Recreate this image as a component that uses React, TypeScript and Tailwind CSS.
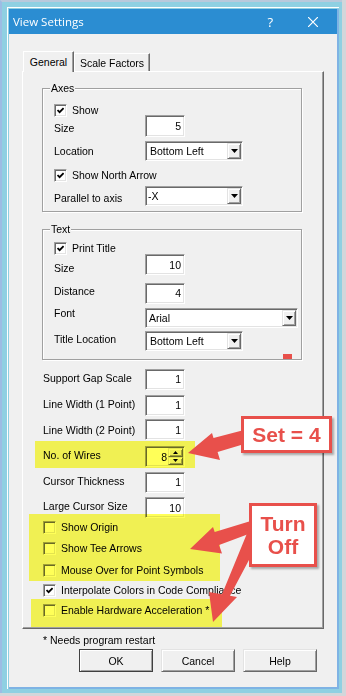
import React from 'react'

// classic win32 3D edges
const sunk =
  'border border-t-[#a0a0a0] border-l-[#a0a0a0] border-r-white border-b-white shadow-[inset_1px_1px_0_#696969,inset_-1px_-1px_0_#e3e3e3]'
const raised =
  'border border-t-[#e3e3e3] border-l-[#e3e3e3] border-r-[#696969] border-b-[#696969] shadow-[inset_1px_1px_0_#fff,inset_-1px_-1px_0_#a0a0a0]'
const etched = 'border border-[#a0a0a0] shadow-[inset_1px_1px_0_#fff,1px_1px_0_#fff]'

function Check({ on }: { on?: boolean }) {
  return (
    <span className={`w-[13px] h-[13px] shrink-0 bg-white flex items-center justify-center ${sunk}`}>
      {on && (
        <svg width="7" height="7" viewBox="0 0 7 7">
          <polyline points="0.5,3 2.6,5.2 6.6,1" fill="none" stroke="#000" strokeWidth="1.8" />
        </svg>
      )}
    </span>
  )
}

function CheckRow({ label, on, h }: { label: string; on?: boolean; h: string }) {
  return (
    <div className={`flex items-center gap-[5px] ${h}`}>
      <Check on={on} />
      <span className="whitespace-nowrap">{label}</span>
    </div>
  )
}

function Num({ v, h = 'h-[21px]', extra = '' }: { v: string; h?: string; extra?: string }) {
  return (
    <div className={`w-[40px] ${h} ${extra} shrink-0 bg-white flex items-center justify-end p-px pr-[3px] ${sunk}`}>
      {v}
    </div>
  )
}

function Spin() {
  return (
    <div className={`w-[40px] h-[21px] mt-[4px] shrink-0 bg-white flex items-center justify-end p-px ${sunk}`}>
      <span className="pr-[1px]">8</span>
      <div className="flex flex-col w-[15px] h-full">
        <div className={`flex-1 bg-[#f0f0f0] flex items-center justify-center ${raised}`}>
          <svg width="5" height="3" viewBox="0 0 5 3"><polygon points="2.5,0 5,3 0,3" fill="#000" /></svg>
        </div>
        <div className={`flex-1 bg-[#f0f0f0] flex items-center justify-center ${raised}`}>
          <svg width="5" height="3" viewBox="0 0 5 3"><polygon points="0,0 5,0 2.5,3" fill="#000" /></svg>
        </div>
      </div>
    </div>
  )
}

function Combo({ v, w, pl }: { v: string; w: string; pl: string }) {
  return (
    <div className={`${w} h-[20px] shrink-0 bg-white flex p-px ${sunk}`}>
      <span className={`flex-1 flex items-center ${pl} whitespace-nowrap`}>{v}</span>
      <span className={`w-[14px] h-full bg-[#f0f0f0] flex items-center justify-center ${raised}`}>
        <svg width="7" height="4" viewBox="0 0 7 4"><polygon points="0,0 7,0 3.5,4" fill="#000" /></svg>
      </span>
    </div>
  )
}

function Btn({ label, def }: { label: string; def?: boolean }) {
  return (
    <div
      className={`w-[74px] h-[23px] bg-[#f0f0f0] flex items-center justify-center ${
        def
          ? 'border border-[#404040] shadow-[inset_1px_1px_0_#fff,inset_-1px_-1px_0_#a0a0a0]'
          : raised
      }`}
    >
      {label}
    </div>
  )
}

export default function App() {
  return (
    <div className="relative w-[346px] h-[696px] bg-[#d3d6da] font-['Liberation_Sans',Arial,sans-serif] text-[10.5px] leading-[14px] text-black overflow-hidden">
      {/* window frame */}
      <div className="w-[342px] h-[693px] bg-[#8fd0e2] border-t-2 border-l-2 border-t-[#b9c9dc] border-l-[#9cbce4] pl-[5px] pt-[5px]">
        <div className="w-[332px] h-[682px] border-t border-l border-white pl-px pt-px">
          <div className="w-[330px] h-[680px] bg-[#f0f0f0] border-r-2 border-b-2 border-[#7fb3e4] flex flex-col">
            {/* title bar */}
            <div className="h-[25px] shrink-0 bg-[#2b8dd2] flex items-center pl-[4px] pr-[19px] text-white font-['Open_Sans',sans-serif] text-[11.5px]">
              <span className="flex-1">View Settings</span>
              <span className="text-[13px] mr-[35px]">?</span>
              <svg width="10" height="10" viewBox="0 0 10 10">
                <path d="M0 0L10 10M10 0L0 10" stroke="#fff" strokeWidth="1.2" />
              </svg>
            </div>

            <div className="flex-1 pl-[13px] pt-[17px]">
              {/* tabs */}
              <div className="flex items-end h-[20px] ml-[1px]">
                <div className="relative z-10 w-[51px] h-[21px] mb-[-1px] bg-[#f0f0f0] border-t border-l border-white border-r border-r-[#696969] shadow-[inset_-1px_0_0_#a0a0a0] flex items-center justify-center">
                  General
                </div>
                <div className="w-[76px] h-[18px] bg-[#f0f0f0] border-t border-l border-white border-r border-r-[#696969] shadow-[inset_-1px_0_0_#a0a0a0] flex items-center justify-center">
                  Scale Factors
                </div>
              </div>

              {/* tab panel */}
              <div className="relative w-[302px] h-[558px] border-t border-l border-t-white border-l-white border-r border-b border-r-[#696969] border-b-[#696969] shadow-[inset_-1px_-1px_0_#a0a0a0] flex flex-col">
                <fieldset className={`ml-[19px] mt-[9px] w-[260px] ${etched}`}>
                  <legend className="ml-[7px] px-[1px] bg-[#f0f0f0] leading-[14px]">Axes</legend>
                  <div className="pl-[11px] pt-[7px] pb-[1px] flex flex-col">
                    <CheckRow label="Show" on h="h-[16px]" />
                    <div className="flex items-center h-[16px]">
                      <span className="w-[91px] shrink-0 mt-[4px]">Size</span>
                      <Num v="5" h="h-[22px]" />
                    </div>
                    <div className="flex items-center h-[34px]">
                      <span className="w-[91px] shrink-0">Location</span>
                      <Combo v="Bottom Left" w="w-[98px]" pl="pl-[3px]" />
                    </div>
                    <CheckRow label="Show North Arrow" on h="h-[14px]" />
                    <div className="flex items-center h-[28px]">
                      <span className="w-[91px] shrink-0 mt-[4px]">Parallel to axis</span>
                      <Combo v="-X" w="w-[98px]" pl="pl-[1px]" />
                    </div>
                  </div>
                </fieldset>

                <fieldset className={`ml-[19px] mt-[10px] w-[260px] ${etched}`}>
                  <legend className="ml-[7px] px-[1px] bg-[#f0f0f0] leading-[14px]">Text</legend>
                  <div className="pl-[11px] pt-[5px] flex flex-col">
                    <CheckRow label="Print Title" on h="h-[14px]" />
                    <div className="flex items-center h-[19px]">
                      <span className="w-[91px] shrink-0 mt-[7px]">Size</span>
                      <Num v="10" />
                    </div>
                    <div className="flex items-center h-[38px]">
                      <span className="w-[91px] shrink-0 mb-[4px]">Distance</span>
                      <Num v="4" />
                    </div>
                    <div className="flex items-center h-[11px]">
                      <span className="w-[91px] shrink-0 mb-[9px]">Font</span>
                      <Combo v="Arial" w="w-[153px]" pl="pl-[2px]" />
                    </div>
                    <div className="flex items-center h-[36px]">
                      <span className="w-[91px] shrink-0 mb-[4px]">Title Location</span>
                      <Combo v="Bottom Left" w="w-[98px]" pl="pl-[3px]" />
                    </div>
                  </div>
                </fieldset>

                <div className="pl-[20px] mt-[6px] flex flex-col">
                  <div className="flex items-center h-[26px]">
                    <span className="w-[102px] shrink-0 mb-[3px]">Support Gap Scale</span>
                    <Num v="1" />
                  </div>
                  <div className="flex items-center h-[26px]">
                    <span className="w-[102px] shrink-0 mb-[3px]">Line Width (1 Point)</span>
                    <Num v="1" />
                  </div>
                  <div className="flex items-center h-[23px]">
                    <span className="w-[102px] shrink-0">Line Width (2 Point)</span>
                    <Num v="1" />
                  </div>
                  <div className="flex items-center h-[27px]">
                    <span className="w-[102px] shrink-0">No. of Wires</span>
                    <Spin />
                  </div>
                  <div className="flex items-center h-[28px]">
                    <span className="w-[102px] shrink-0 mb-[2px]">Cursor Thickness</span>
                    <Num v="1" />
                  </div>
                  <div className="flex items-center h-[23px]">
                    <span className="w-[102px] shrink-0 mb-[3px]">Large Cursor Size</span>
                    <Num v="10" />
                  </div>
                  <CheckRow label="Show Origin" h="h-[16px]" />
                  <CheckRow label="Show Tee Arrows" h="h-[26px]" />
                  <CheckRow label="Mouse Over for Point Symbols" h="h-[18px]" />
                  <CheckRow label="Interpolate Colors in Code Compliance" on h="h-[22px]" />
                  <CheckRow label="Enable Hardware Acceleration *" h="h-[18px]" />
                </div>

                {/* stray red mark */}
                <div className="absolute left-[260px] top-[282px] w-[9px] h-[5px] bg-[#e8504b]" />

                {/* highlighter */}
                <div className="absolute left-[12px] top-[369px] w-[160px] h-[27px] bg-[#ffff58] mix-blend-multiply" />
                <div className="absolute left-[6px] top-[442px] w-[191px] h-[67px] bg-[#ffff58] mix-blend-multiply" />
                <div className="absolute left-[8px] top-[527px] w-[191px] h-[28px] bg-[#ffff58] mix-blend-multiply" />
              </div>

              <div className="pl-[21px] mt-[4px]">* Needs program restart</div>
              <div className="flex gap-[8px] pl-[57px] mt-[2px]">
                <Btn label="OK" def />
                <Btn label="Cancel" />
                <Btn label="Help" />
              </div>
            </div>
          </div>
        </div>
      </div>

      {/* annotation arrows */}
      <svg className="absolute left-0 top-0" width="346" height="696" viewBox="0 0 346 696">
        <g fill="#e8504b">
          <polygon points="188,453 212,433 213.5,438 246,429.5 246,443.5 217.6,452 220,460" />
          <polygon points="190,549 213,527 214.7,532 254,520 254,532 219.1,545 222,553.5" />
          <polygon points="213,622 209,592 222,594.3 256,511.5 256,546.7 230,595.75 237,597" />
        </g>
      </svg>

      {/* callouts */}
      <div className="absolute left-[241px] top-[416px] w-[91px] h-[37px] border-[3px] border-[#e8504b] bg-white shadow-[2px_2px_2px_rgba(0,0,0,0.3)] flex items-center justify-center text-[21px] leading-[23px] font-bold text-[#e8504b]">
        Set = 4
      </div>
      <div className="absolute left-[249px] top-[503px] w-[68px] h-[64px] border-[3px] border-[#e8504b] bg-white shadow-[2px_2px_2px_rgba(0,0,0,0.3)] flex flex-col items-center justify-center text-[21px] leading-[23px] font-bold text-[#e8504b]">
        <span>Turn</span>
        <span>Off</span>
      </div>
    </div>
  )
}
